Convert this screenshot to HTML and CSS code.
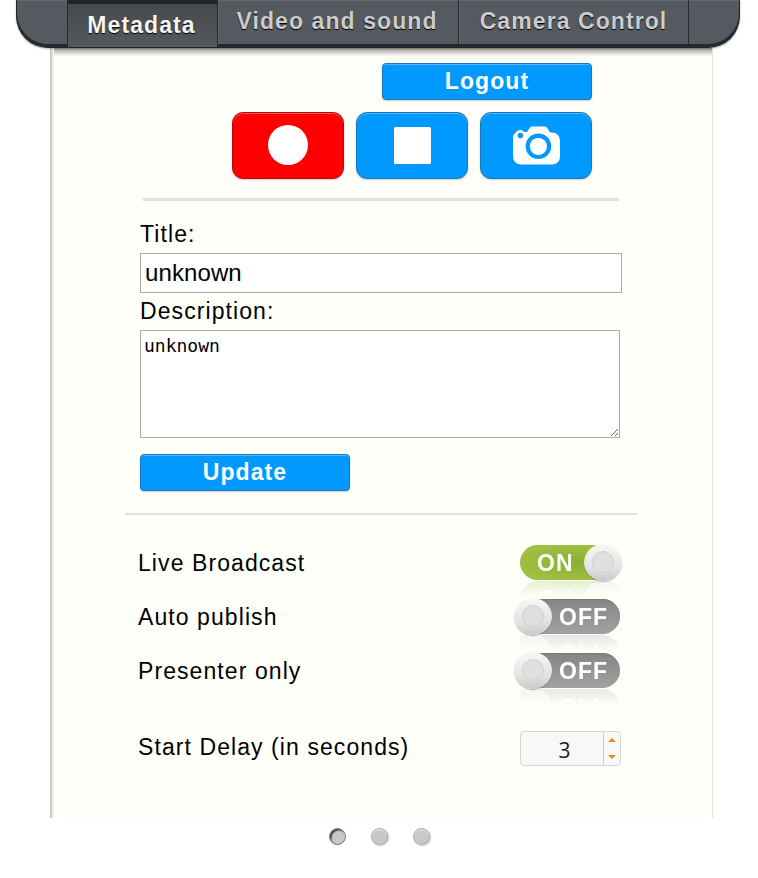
FILE: index.html
```html
<!DOCTYPE html>
<html lang="en">
<head>
<meta charset="utf-8">
<title>Recorder</title>
<link rel="stylesheet" href="styles.css">
</head>
<body>
<nav class="tabs">
  <a class="tab active">Metadata</a>
  <a class="tab video">Video and sound</a>
  <a class="tab camera">Camera Control</a>
</nav>
<main class="panel">
  <button class="btn logout">Logout</button>
  <div class="controls">
    <button class="btn control record" aria-label="Record"><svg width="40" height="40"><circle cx="20" cy="20" r="20"/></svg></button>
    <button class="btn control" aria-label="Stop"><svg width="37" height="37"><rect width="37" height="37" rx="1.5"/></svg></button>
    <button class="btn control" aria-label="Snapshot"><svg width="47" height="39" viewBox="0 0 47 39"><path fill-rule="evenodd" d="M0 11.500Q0 8 2.500 7C4 3.500 9 3 11 6H14L17 1.500Q18 .5 19.500 .5H31.500Q33 .5 34 1.500L37 6.500H39Q47 7 47 15V30Q47 38.500 38.500 38.500H8.500Q0 38.500 0 30ZM10.200 9.500A2.800 2.800 0 1 0 4.600 9.500A2.800 2.800 0 1 0 10.200 9.500M38.200 20.300A12.800 12.800 0 1 0 12.600 20.300A12.800 12.800 0 1 0 38.200 20.300"/><circle cx="25.400" cy="20.300" r="8.600"/></svg></button>
  </div>
  <div class="rule thick"></div>
  <form class="meta">
    <label for="title">Title:</label>
    <input id="title" class="title" type="text" value="unknown">
    <label for="description">Description:</label>
    <textarea id="description" class="description" spellcheck="false">unknown</textarea>
    <button class="btn update" type="button">Update</button>
  </form>
  <div class="rule thin"></div>
  <section class="settings">
    <div class="row"><span>Live Broadcast</span><div class="switch on">ON<i class="knob"></i></div></div>
    <div class="row"><span>Auto publish</span><div class="switch off">OFF<i class="knob"></i></div></div>
    <div class="row"><span>Presenter only</span><div class="switch off">OFF<i class="knob"></i></div></div>
    <div class="row delay"><span>Start Delay (in seconds)</span>
      <div class="spinner"><span class="value">3</span><span class="arrows"><svg width="8" height="4"><path d="M0 4L4 0L8 4Z"/></svg><svg width="8" height="4"><path d="M0 0H8L4 4Z"/></svg></span></div>
    </div>
  </section>
</main>
<div class="dots"><span class="dot current"></span><span class="dot"></span><span class="dot"></span></div>
</body>
</html>
```

FILE: styles.css
```css
* { box-sizing: border-box; }
body {
  margin: 0;
  height: 878px;
  overflow: hidden;
  background: #fff;
  color: #000;
  font: 23px/27px "Liberation Sans", sans-serif;
  letter-spacing: 1.08px;
}
button, input, textarea { margin: 0; font: inherit; }
.tabs {
  position: relative;
  z-index: 1;
  display: flex;
  width: 724px;
  height: 48px;
  margin-left: 16px;
  padding-left: 50px;
  background: #555a61;
  border: solid #22262a;
  border-width: 0 1px 1px;
  border-radius: 0 0 32px 32px;
  box-shadow: inset 0 -3px #25292e, inset 0 1px #656a70, 0 1px 2px rgba(0, 0, 0, .3);
}
.tab {
  height: 44px;
  padding: 8px 2px 0 0;
  border-right: 1px solid #25292c;
  color: #ccc;
  font-weight: bold;
  text-align: center;
  text-shadow: 0 1px 1px #000;
  white-space: nowrap;
  box-shadow: inset 1px 0 #61666c;
}
.tab.active {
  width: 151px;
  height: 47px;
  border-left: 1px solid #25292c;
  background: linear-gradient(#222526 4px, #45494b 4px, #555a5e);
  color: #f6f6f6;
  padding-top: 12px;
  box-shadow: none;
}
.video { width: 241px; }
.camera { width: 230px; padding-right: 0; }
.panel {
  width: 663px;
  height: 770px;
  margin-left: 50px;
  padding-top: 15px;
  background: linear-gradient(#9b9a96, #cccbc8 4px, #f0f0ec 7px, #fffffa 9px);
  border-right: 1px solid #e3e3df;
  box-shadow: inset 1px 0 #c4c6c2, inset 2px 0 #d2d4d0, inset 3px 0 #e4e6e1, inset 4px 0 #f5f6f1;
}
.btn {
  display: flex;
  align-items: center;
  justify-content: center;
  width: 210px;
  height: 37px;
  padding: 0;
  border: 1px solid #1878bd;
  border-radius: 4px;
  background: #0099ff;
  box-shadow: inset 0 1px #4eb8ff, 0 1px 2px rgba(0, 0, 0, .2);
  color: #fff;
  font-weight: bold;
  letter-spacing: inherit;
}
.logout { margin-left: 332px; }
.controls {
  display: flex;
  gap: 12px;
  margin: 12px 0 0 182px;
}
.control { width: 112px; height: 67px; border-radius: 11px; }
.control svg { fill: #fff; }
.record {
  padding-bottom: 1px;
  background: #f00;
  border-color: #b30c0c;
  box-shadow: inset 0 1px #ff5555, 0 1px 2px rgba(0, 0, 0, .2);
}
.rule { background: #e1e1df; }
.thick { width: 476px; height: 3px; margin: 19px 0 0 93px; }
.thin { width: 512px; height: 2px; margin: 22px 0 0 75px; }
.meta {
  display: flex;
  flex-direction: column;
  align-items: flex-start;
  margin: 20px 0 0 90px;
}
.title {
  width: 482px;
  height: 40px;
  margin: 5px 0;
  padding: 0 4px;
  border: 1px solid #a9a9a9;
  font-size: 24px;
  letter-spacing: 0.1px;
}
.description {
  width: 480px;
  height: 108px;
  margin: 5px 0 16px;
  padding: 4px 3px;
  border: 1px solid #a9a9a9;
  font: 18px/21px "DejaVu Sans Mono", monospace;
  letter-spacing: 0;
}
.settings { padding: 21px 91px 0 88px; }
.row {
  display: flex;
  align-items: center;
  justify-content: space-between;
  height: 54px;
}
.switch {
  position: relative;
  width: 100px;
  height: 35px;
  margin: 0 1px 2px 0;
  border-radius: 18px;
  color: #fff;
  font-weight: bold;
  line-height: 36px;
  -webkit-box-reflect: below 1px linear-gradient(transparent 54%, rgba(0, 0, 0, .25));
}
.on {
  padding-left: 17px;
  background: radial-gradient(ellipse at 55% 50%, #8bae30, #a0c044 75%);
}
.off {
  padding-left: 39px;
  background: linear-gradient(#858585, #a2a2a2);
  box-shadow: inset 0 1px 1px #777;
}
.knob {
  position: absolute;
  top: -1px;
  width: 38px;
  height: 37px;
  border-radius: 50%;
  background: linear-gradient(#f8f8f8, #e2e2e2 65%, #c9c9c9);
  box-shadow: 0 1px 1px rgba(0, 0, 0, .28);
}
.knob::after {
  content: "";
  position: absolute;
  inset: 7px 8px 8px 8px;
  border: 1px solid #cfcfcf;
  border-radius: 50%;
  background: #dfdfdf;
}
.on .knob { right: -2px; }
.off .knob { left: -6px; }
.delay { margin-top: 24px; height: 51px; }
.spinner {
  display: flex;
  width: 101px;
  height: 35px;
  margin-top: 2px;
  border: 1px solid #d5d5d5;
  border-radius: 4px;
  background: #f8f8f8;
  overflow: hidden;
}
.value {
  flex: 1;
  padding-left: 5px;
  color: #222;
  font: 21px/36px "Open Sans", sans-serif;
  letter-spacing: 0;
  text-align: center;
}
.arrows {
  display: flex;
  flex-direction: column;
  align-items: center;
  justify-content: space-between;
  width: 17px;
  padding: 6px 1px 6px 0;
  border-left: 1px solid #ccc;
}
.arrows svg { fill: #ef8c08; }
.dots { display: flex; gap: 25px; margin: 10px 0 0 329px; }
.dot {
  width: 17px;
  height: 17px;
  border: 1px solid #aaa;
  border-radius: 50%;
  background: #c8c8c8;
  box-shadow: inset 0 1px 1px #eee, 1px 1px 2px rgba(0, 0, 0, .22);
}
.current { border-color: #777; box-shadow: inset 1.5px 1.5px 1px #444; }
```
